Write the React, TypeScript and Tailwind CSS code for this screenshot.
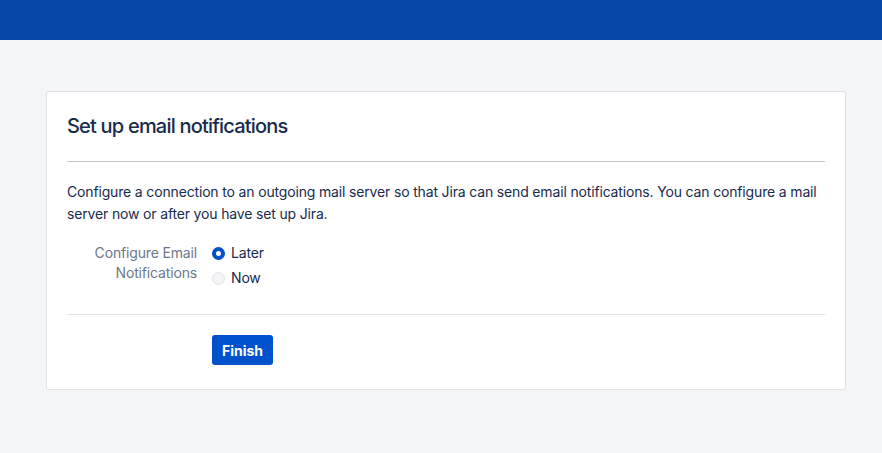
export default function App() {
  return (
    <div className="min-h-screen bg-[#f4f5f7]" style={{ fontFamily: "Inter, 'Noto Sans', sans-serif" }}>
      <div className="h-10 bg-[#0747a6]" />

      <div className="pt-[51px] pl-[46px]">
        <div className="w-[800px] rounded-[3px] border border-[#dfe1e6] bg-white px-5 pt-[22px] pb-6 tracking-[-0.01em]">
          <h1 className="text-[20px] leading-6 font-medium text-[#172b4d] tracking-[-0.04em]">
            Set up email notifications
          </h1>
          <div className="mt-[23px] h-px bg-[#c1c7d0]" />

          <p className="mt-[19px] text-[14px] leading-[22px] text-[#172b4d]">
            Configure a connection to an outgoing mail server so that Jira can send email notifications. You can configure a mail server now or after you have set up Jira.
          </p>

          <div className="mt-[18px] flex gap-[15px]">
            <div className="w-[130px] text-right text-[14px] leading-5 text-[#6b778c]">
              Configure Email Notifications
            </div>
            <div className="flex flex-col gap-[5px]">
              <label className="flex items-center gap-[6px] text-[14px] leading-5 text-[#172b4d]">
                <span className="flex h-[13px] w-[13px] items-center justify-center rounded-full bg-[#0052cc]">
                  <span className="h-[5px] w-[5px] rounded-full bg-white" />
                </span>
                Later
              </label>
              <label className="flex items-center gap-[6px] text-[14px] leading-5 text-[#172b4d]">
                <span className="h-[13px] w-[13px] rounded-full border border-[#dfe1e6] bg-[#f4f5f7]" />
                Now
              </label>
            </div>
          </div>

          <div className="mt-[26px] h-px bg-[#dfe1e6]" />

          <div className="mt-5 pl-[145px]">
            <button className="h-[30px] rounded-[3px] bg-[#0052cc] px-[10px] text-[14px] font-bold text-white tracking-normal">
              Finish
            </button>
          </div>
        </div>
      </div>
    </div>
  )
}
